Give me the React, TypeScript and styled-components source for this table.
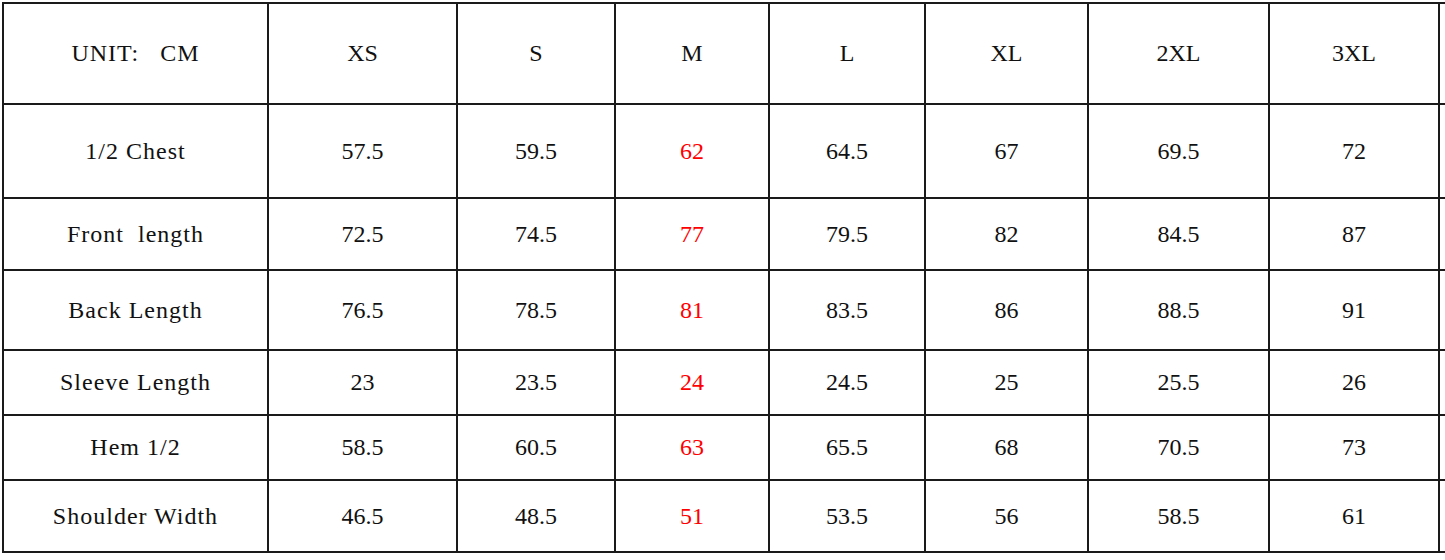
import React from 'react'
import styled, {createGlobalStyle} from 'styled-components'

const GlobalStyle = createGlobalStyle`
    html, body {
        margin: 0;
        padding: 0;
        background: #ffffff;
        overflow: hidden;
    }
`

const columnWidths = [265, 189, 158, 154, 156, 163, 181, 170, 120]
const rowHeights = [101, 94, 72, 80, 65, 65, 72]

const sizes = ['XS', 'S', 'M', 'L', 'XL', '2XL', '3XL']

const rows = [
    {label: '1/2 Chest', values: ['57.5', '59.5', '62', '64.5', '67', '69.5', '72']},
    {label: 'Front\u00a0\u00a0length', values: ['72.5', '74.5', '77', '79.5', '82', '84.5', '87']},
    {label: 'Back Length', values: ['76.5', '78.5', '81', '83.5', '86', '88.5', '91']},
    {label: 'Sleeve Length', values: ['23', '23.5', '24', '24.5', '25', '25.5', '26']},
    {label: 'Hem 1/2', values: ['58.5', '60.5', '63', '65.5', '68', '70.5', '73']},
    {label: 'Shoulder Width', values: ['46.5', '48.5', '51', '53.5', '56', '58.5', '61']},
]

// the M column is the one that is highlighted
const highlightIndex = 2

const StyledPage = styled.div`
    padding: 2px 0 0 2px;
    width: 1445px;
    height: 560px;
    overflow: hidden;
`

const StyledTable = styled.table`
    border-collapse: collapse;
    table-layout: fixed;
    width: ${columnWidths.reduce((a, b) => a + b, 0)}px;
    font-family: "Liberation Serif", "Times New Roman", serif;
    font-size: 24px;
    color: #111111;
`

const StyledCell = styled.td<{$highlight?: boolean}>`
    border: 2px solid #1a1a1a;
    text-align: center;
    vertical-align: middle;
    padding: 0;
    white-space: nowrap;
    color: ${({$highlight}) => ($highlight ? '#ff0000' : '#111111')};
`

const StyledHeadCell = styled.th`
    border: 2px solid #1a1a1a;
    text-align: center;
    vertical-align: middle;
    padding: 0;
    font-weight: normal;
    white-space: nowrap;
`

const StyledLabel = styled.span`
    letter-spacing: 1px;
`

export default function App() {
    return (
        <>
            <GlobalStyle />
            <StyledPage>
                <StyledTable>
                    <colgroup>
                        {columnWidths.map((w, i) => (
                            <col key={i} style={{width: w}} />
                        ))}
                    </colgroup>
                    <thead>
                        <tr style={{height: rowHeights[0]}}>
                            <StyledHeadCell>
                                <StyledLabel>UNIT:&nbsp;&nbsp;&nbsp;CM</StyledLabel>
                            </StyledHeadCell>
                            {sizes.map((s) => (
                                <StyledHeadCell key={s}>{s}</StyledHeadCell>
                            ))}
                            <StyledHeadCell />
                        </tr>
                    </thead>
                    <tbody>
                        {rows.map((row, r) => (
                            <tr key={row.label} style={{height: rowHeights[r + 1]}}>
                                <StyledCell>
                                    <StyledLabel>{row.label}</StyledLabel>
                                </StyledCell>
                                {row.values.map((v, i) => (
                                    <StyledCell key={i} $highlight={i === highlightIndex}>
                                        {v}
                                    </StyledCell>
                                ))}
                                <StyledCell />
                            </tr>
                        ))}
                    </tbody>
                </StyledTable>
            </StyledPage>
        </>
    )
}
